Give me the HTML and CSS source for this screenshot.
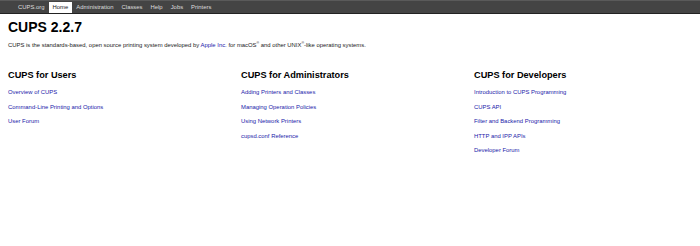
FILE: index.html
```html
<!doctype html>
<html>
<head>
<meta charset="utf-8">
<title>Home - CUPS 2.2.7</title>
<link rel="stylesheet" href="styles.css">
</head>
<body>
<div class="header">
	<ul>
		<li><a href="#">CUPS.org</a></li>
		<li class="active"><a href="#">Home</a></li>
		<li><a href="#">Administration</a></li>
		<li><a href="#">Classes</a></li>
		<li><a href="#">Help</a></li>
		<li><a href="#">Jobs</a></li>
		<li><a href="#">Printers</a></li>
	</ul>
</div>
<div class="body">
	<h1>CUPS 2.2.7</h1>
	<p class="intro">CUPS is the standards-based, open source printing system developed by <a href="#">Apple Inc.</a> for macOS<sup>&reg;</sup> and other UNIX<sup>&reg;</sup>-like operating systems.</p>
	<div class="row">
		<div class="col">
			<h2>CUPS for Users</h2>
			<p><a href="#">Overview of CUPS</a></p>
			<p><a href="#">Command-Line Printing and Options</a></p>
			<p><a href="#">User Forum</a></p>
		</div>
		<div class="col">
			<h2>CUPS for Administrators</h2>
			<p><a href="#">Adding Printers and Classes</a></p>
			<p><a href="#">Managing Operation Policies</a></p>
			<p><a href="#">Using Network Printers</a></p>
			<p><a href="#">cupsd.conf Reference</a></p>
		</div>
		<div class="col">
			<h2>CUPS for Developers</h2>
			<p><a href="#">Introduction to CUPS Programming</a></p>
			<p><a href="#">CUPS API</a></p>
			<p><a href="#">Filter and Backend Programming</a></p>
			<p><a href="#">HTTP and IPP APIs</a></p>
			<p><a href="#">Developer Forum</a></p>
		</div>
	</div>
</div>
</body>
</html>
```
FILE: styles.css
```css
body
{
	margin:0px;
	padding:0px;
	background:#FFF;
	font-family:"Liberation Sans", Arial, sans-serif;
	color:#000;
}
a
{
	color:#2222AA;
	text-decoration:none;
}
.header
{
	height:14px;
	background:#444;
	border-top:1px solid #5A5A5A;
	border-bottom:1px solid #222;
	box-sizing:border-box;
}
.header ul
{
	margin:0px;
	padding:0px 0px 0px 14px;
	list-style:none;
	display:flex;
	height:100%;
	align-items:flex-end;
}
.header li
{
	height:11px;
	padding:0px 4px;
	font-size:5.9px;
	line-height:11px;
}
.header li a
{
	color:#DDD;
}
.header li.active
{
	background:#FFF;
}
.header li.active a
{
	color:#222;
}
.body
{
	padding:0px 8px;
}
h1
{
	margin:3px 0px 0px 0px;
	font-size:14px;
	line-height:20px;
	font-weight:bold;
}
.intro
{
	margin:3px 0px 0px 0px;
	font-size:5.9px;
	line-height:10px;
	color:#222;
}
.intro sup
{
	font-size:3.5px;
	line-height:0;
}
.row
{
	display:grid;
	grid-template-columns:233px 233px 1fr;
	margin-top:18px;
}
h2
{
	margin:0px 0px 3px 0px;
	font-size:9.2px;
	line-height:14px;
	font-weight:bold;
}
.col p
{
	margin:0px;
	font-size:5.9px;
	line-height:14.5px;
}
```
